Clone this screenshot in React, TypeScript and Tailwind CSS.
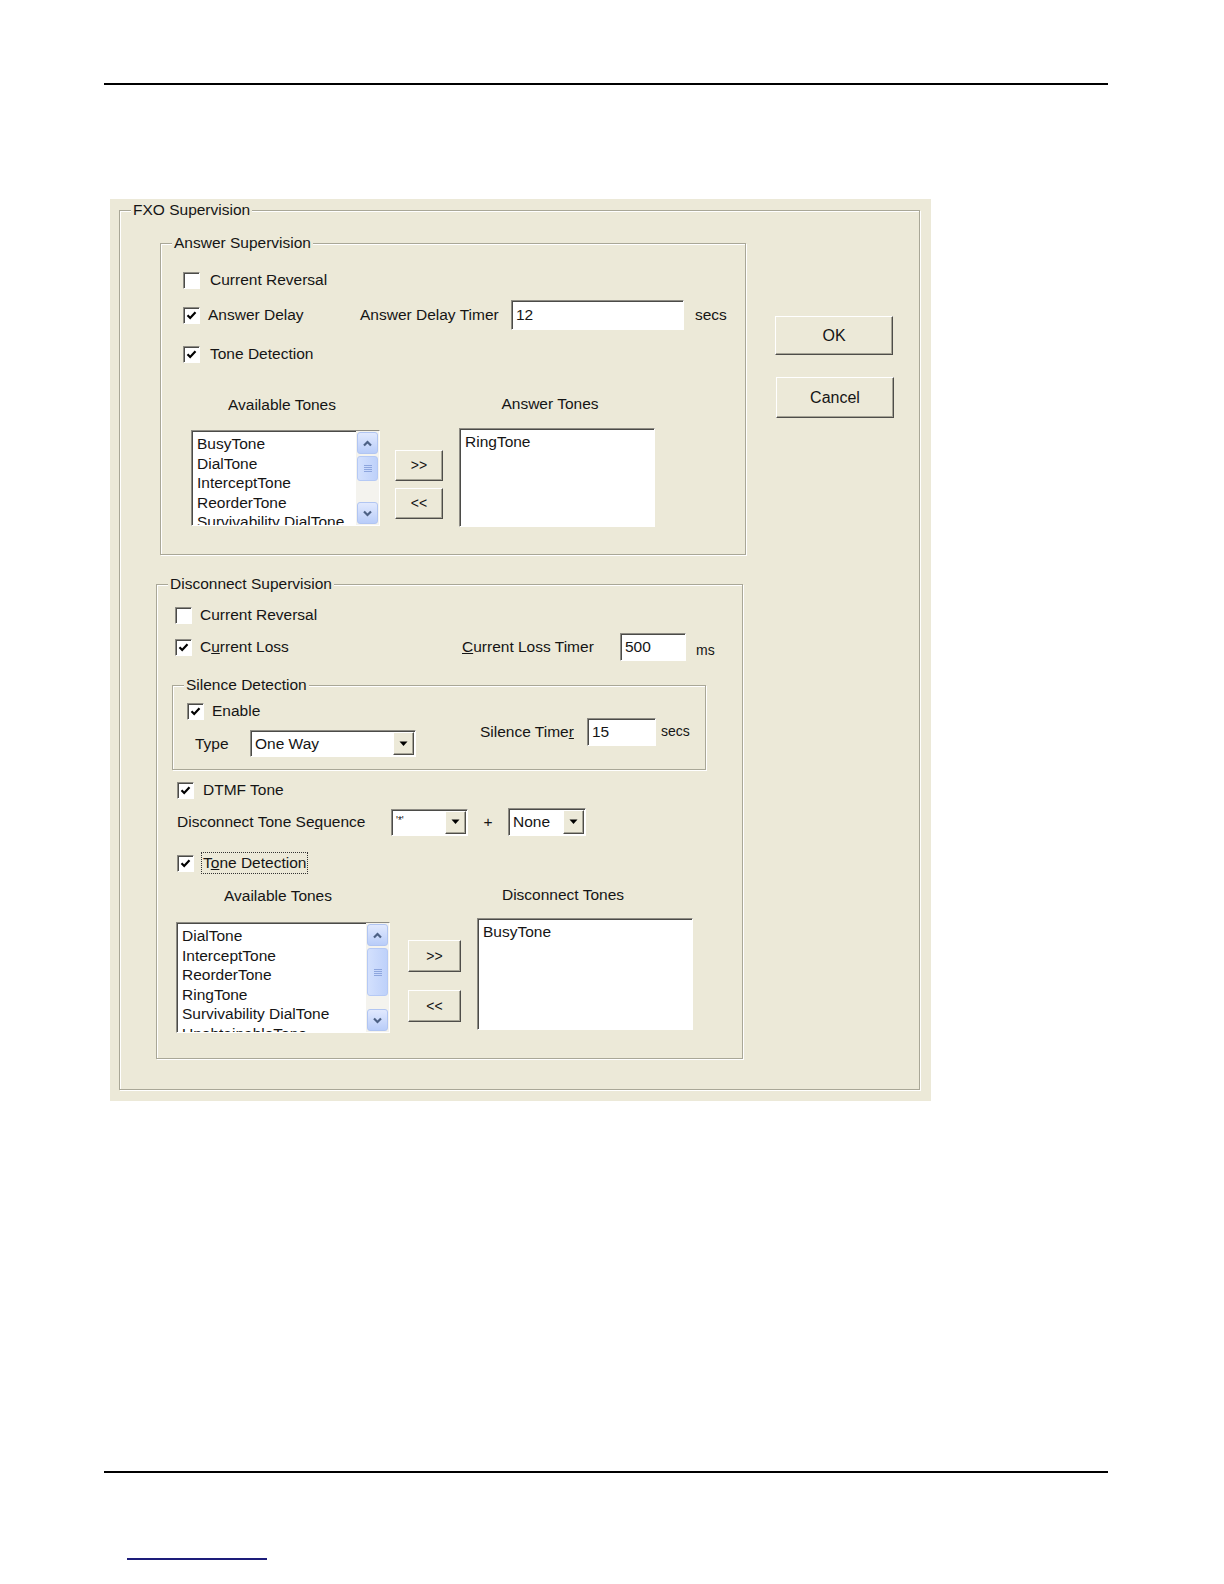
import type { ReactNode } from 'react'

// classic win32 bevels
const sunken =
  'bg-white border border-t-[#8e8c84] border-l-[#8e8c84] border-r-white border-b-white shadow-[inset_1px_1px_0_#4b4b48]'
const raised =
  'bg-[#ece9d8] border border-t-white border-l-white border-r-[#4e4d49] border-b-[#4e4d49] shadow-[inset_-1px_-1px_0_#a6a496]'

function Check({ checked }: { checked?: boolean }) {
  return (
    <span className={`w-[17px] h-[17px] shrink-0 flex items-center justify-center ${sunken}`}>
      {checked && (
        <svg width="11" height="11" viewBox="0 0 11 11">
          <path d="M1.5 5.2 L4.2 8 L9.5 2.2" fill="none" stroke="#000" strokeWidth="2.2" />
        </svg>
      )}
    </span>
  )
}

function Group({ title, className, children }: { title: string; className?: string; children?: ReactNode }) {
  return (
    <div
      className={`relative border border-[#a9a797] shadow-[inset_1px_1px_0_#fff,1px_1px_0_#fff] ${className ?? ''}`}
    >
      <span className="absolute -top-[11px] left-[11px] px-[2px] bg-[#ece9d8] leading-[20px]">{title}</span>
      {children}
    </div>
  )
}

function Btn({ className, children }: { className?: string; children: ReactNode }) {
  return <div className={`flex items-center justify-center ${raised} ${className ?? ''}`}>{children}</div>
}

function Edit({ value, className }: { value: string; className?: string }) {
  return <div className={`flex items-center pl-[4px] ${sunken} ${className ?? ''}`}>{value}</div>
}

function ScrollBtn({ up }: { up?: boolean }) {
  return (
    <div className="h-[22px] shrink-0 rounded-[3px] border border-[#b1c5f2] bg-[linear-gradient(180deg,#e1e9fe,#b9cdf9)] flex items-center justify-center">
      <svg width="13" height="13" viewBox="0 0 13 13">
        <polyline
          points={up ? '3,8.5 6.5,5 10,8.5' : '3,4.5 6.5,8 10,4.5'}
          fill="none"
          stroke="#4d6185"
          strokeWidth="2.2"
        />
      </svg>
    </div>
  )
}

function ScrollBar({ thumb }: { thumb: string }) {
  return (
    <div className="w-[23px] shrink-0 self-stretch flex flex-col bg-[#f4f3ee] p-[1px]">
      <ScrollBtn up />
      <div
        className={`mt-[2px] ${thumb} rounded-[3px] border border-[#b5c9f5] bg-[linear-gradient(90deg,#d3e0fd,#bed1fa)] flex items-center justify-center`}
      >
        <svg width="8" height="9" viewBox="0 0 8 9">
          <path d="M0 1.5h8M0 3.5h8M0 5.5h8M0 7.5h8" stroke="#8ea6de" strokeWidth="1" />
        </svg>
      </div>
      <div className="flex-1" />
      <ScrollBtn />
    </div>
  )
}

function ListBox({
  items,
  className,
  thumb,
}: {
  items: string[]
  className?: string
  thumb?: string
}) {
  return (
    <div className={`flex overflow-hidden ${sunken} ${className ?? ''}`}>
      <div className="flex-1 pl-[5px] pt-[3px] leading-[19.5px] overflow-hidden">
        {items.map((t) => (
          <div key={t} className="whitespace-nowrap">
            {t}
          </div>
        ))}
      </div>
      {thumb && <ScrollBar thumb={thumb} />}
    </div>
  )
}

function Combo({ value, className, small }: { value: string; className?: string; small?: boolean }) {
  return (
    <div className={`flex items-stretch ${sunken} ${className ?? ''}`}>
      <span className={`flex-1 pl-[4px] flex ${small ? 'items-start pt-[3px] text-[10px]' : 'items-center'}`}>
        {value}
      </span>
      <span className={`w-[21px] m-[1px] flex items-center justify-center ${raised}`}>
        <svg width="9" height="6" viewBox="0 0 9 6">
          <path d="M0.5 0.5 L8.5 0.5 L4.5 5 Z" fill="#000" />
        </svg>
      </span>
    </div>
  )
}

function AnswerGroup() {
  return (
    <Group title="Answer Supervision" className="w-[586px] h-[312px] pt-[24px] pl-[22px] flex flex-col">
      <div className="h-[24px] flex items-center">
        <Check />
        <span className="ml-[10px]">Current Reversal</span>
      </div>
      <div className="mt-[8px] h-[30px] flex items-center">
        <div className="w-[177px] flex items-center">
          <Check checked />
          <span className="ml-[8px]">Answer Delay</span>
        </div>
        <span className="w-[151px]">Answer Delay Timer</span>
        <Edit value="12" className="w-[173px] h-[30px]" />
        <span className="ml-[11px]">secs</span>
      </div>
      <div className="mt-[12px] h-[24px] flex items-center">
        <Check checked />
        <span className="ml-[10px]">Tone Detection</span>
      </div>
      <div className="mt-[29px] h-[20px] flex items-center">
        <span className="ml-[8px] w-[182px] text-center">Available Tones</span>
        <span className="ml-[86px] w-[182px] text-center -mt-[3px]">Answer Tones</span>
      </div>
      <div className="mt-[13px] ml-[8px] flex items-start">
        <ListBox
          items={['BusyTone', 'DialTone', 'InterceptTone', 'ReorderTone', 'Survivability DialTone']}
          className="w-[189px] h-[96px] mt-[2px]"
          thumb="h-[25px]"
        />
        <div className="ml-[15px] mt-[22px] w-[48px] flex flex-col">
          <Btn className="h-[31px] text-[14px]">&gt;&gt;</Btn>
          <Btn className="h-[31px] mt-[7px] text-[14px]">&lt;&lt;</Btn>
        </div>
        <ListBox items={['RingTone']} className="ml-[16px] w-[196px] h-[99px]" />
      </div>
    </Group>
  )
}

function DisconnectGroup() {
  return (
    <Group
      title="Disconnect Supervision"
      className="mt-[29px] -ml-[4px] w-[587px] h-[475px] pt-[18px] pl-[15px] flex flex-col"
    >
      <div className="ml-[3px] h-[24px] flex items-center">
        <Check />
        <span className="ml-[8px]">Current Reversal</span>
      </div>
      <div className="ml-[3px] mt-[6px] h-[28px] flex items-center">
        <div className="w-[287px] flex items-center">
          <Check checked />
          <span className="ml-[8px]">
            C<u>u</u>rrent Loss
          </span>
        </div>
        <span className="w-[158px]">
          <u>C</u>urrent Loss Timer
        </span>
        <Edit value="500" className="w-[66px] h-[28px]" />
        <span className="ml-[10px] mt-[6px] text-[14px]">ms</span>
      </div>
      <Group title="Silence Detection" className="mt-[24px] w-[534px] h-[85px] pt-[13px] pl-[14px] flex items-start">
        <div className="flex flex-col">
          <div className="h-[24px] flex items-center">
            <Check checked />
            <span className="ml-[8px]">Enable</span>
          </div>
          <div className="mt-[7px] h-[27px] flex items-center">
            <span className="ml-[8px] w-[55px]">Type</span>
            <Combo value="One Way" className="w-[166px] h-[27px]" />
          </div>
        </div>
        <div className="ml-[64px] mt-[19px] flex items-center">
          <span className="w-[107px]">
            Silence Time<u>r</u>
          </span>
          <Edit value="15" className="w-[69px] h-[28px]" />
          <span className="ml-[5px] -mt-[2px] text-[14px]">secs</span>
        </div>
      </Group>
      <div className="ml-[5px] mt-[8px] h-[24px] flex items-center">
        <Check checked />
        <span className="ml-[9px]">DTMF Tone</span>
      </div>
      <div className="ml-[5px] mt-[6px] h-[28px] flex items-center">
        <span className="w-[214px]">
          Disconnect Tone Se<u>q</u>uence
        </span>
        <Combo value="'*'" small className="w-[77px] h-[27px]" />
        <span className="w-[40px] text-center">+</span>
        <Combo value="None" className="w-[78px] h-[28px]" />
      </div>
      <div className="ml-[5px] mt-[15px] h-[24px] flex items-center">
        <Check checked />
        <span className="ml-[7px] px-[1px] border border-dotted border-[#333] leading-[20px]">
          T<u>o</u>ne Detection
        </span>
      </div>
      <div className="mt-[11px] h-[20px] flex items-center">
        <span className="ml-[4px] w-[204px] text-center">Available Tones</span>
        <span className="ml-[97px] w-[172px] text-center -mt-[3px]">Disconnect Tones</span>
      </div>
      <div className="mt-[12px] ml-[4px] flex items-start">
        <ListBox
          items={['DialTone', 'InterceptTone', 'ReorderTone', 'RingTone', 'Survivability DialTone', 'UnobtainableTone']}
          className="w-[214px] h-[111px] mt-[4px]"
          thumb="h-[48px]"
        />
        <div className="ml-[18px] mt-[22px] w-[53px] flex flex-col">
          <Btn className="h-[32px] text-[14px]">&gt;&gt;</Btn>
          <Btn className="h-[32px] mt-[18px] text-[14px]">&lt;&lt;</Btn>
        </div>
        <ListBox items={['BusyTone']} className="ml-[16px] w-[216px] h-[112px]" />
      </div>
    </Group>
  )
}

export default function App() {
  return (
    <div className="w-[1224px] h-[1584px] bg-white flex flex-col font-['Liberation_Sans',Arial,sans-serif] text-[15.5px] text-[#151515]">
      <div className="mt-[83px] ml-[104px] w-[1004px] h-[2px] bg-black" />
      <div className="mt-[114px] ml-[110px] w-[821px] h-[902px] bg-[#ece9d8] pt-[11px] pl-[9px]">
        <Group title="FXO Supervision" className="w-[801px] h-[880px] pt-[32px] pl-[40px] flex items-start">
          <div className="flex flex-col">
            <AnswerGroup />
            <DisconnectGroup />
          </div>
          <div className="ml-[29px] mt-[73px] flex flex-col">
            <Btn className="w-[118px] h-[39px] text-[16px]">OK</Btn>
            <Btn className="w-[118px] h-[41px] mt-[22px] ml-[1px] text-[16px]">Cancel</Btn>
          </div>
        </Group>
      </div>
      <div className="mt-[370px] ml-[104px] w-[1004px] h-[2px] bg-black" />
      <div className="mt-[85px] ml-[127px] w-[140px] h-[2px] bg-[#1d1d7a]" />
    </div>
  )
}
